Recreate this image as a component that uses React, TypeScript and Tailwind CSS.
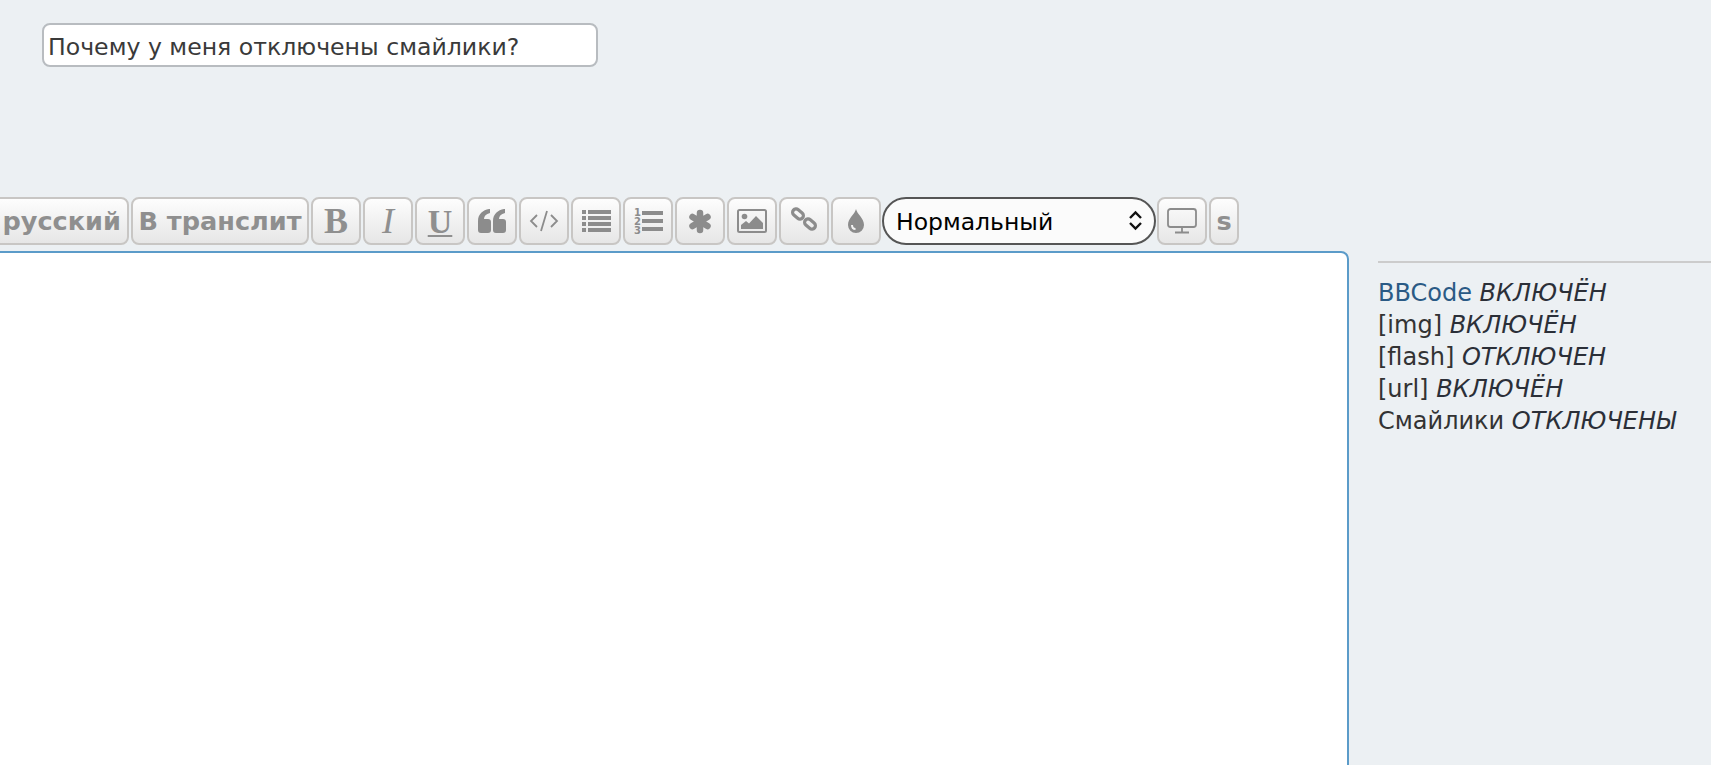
import React from "react";

const btn =
  "flex h-[48px] shrink-0 items-center justify-center rounded-[8px] border-2 border-[#c8c6c4] bg-gradient-to-b from-[#fdfdfd] to-[#e6e6e6] text-[#8f8f8f]";
const square = btn + " w-[50px]";
const G = "#8c8c8c";

function Stat({ label, value, link }: { label: string; value: string; link?: boolean }) {
  return (
    <div>
      <span className={link ? "text-[#2a5a85]" : ""}>{label}</span> <em className="text-[#2b2f38]">{value}</em>
    </div>
  );
}

export default function App() {
  return (
    <div className="h-[765px] w-full overflow-hidden bg-[#ecf0f3] font-['DejaVu_Sans',sans-serif] text-[#333333]">
      <div className="pl-[42px] pt-[23px]">
        <input
          readOnly
          value="Почему у меня отключены смайлики?"
          className="block h-[44px] w-[556px] rounded-[8px] border-2 border-[#b8bcc0] bg-white px-[4px] pt-[4px] text-[23.6px] text-[#3a3a3a] outline-none"
        />
      </div>
      <div className="mt-[130px] flex gap-[2px]">
        <div className={btn + " -ml-[40px] w-[169px] justify-end pr-[6px] text-[25.6px] font-bold"}>русский</div>
        <div className={btn + " w-[178px] text-[25.6px] font-bold"}>В транслит</div>
        <div className={square + " font-['Liberation_Serif',serif] text-[36px] font-bold"}>B</div>
        <div className={square + " font-['Liberation_Serif',serif] text-[36px] italic"}>I</div>
        <div className={square + " font-['Liberation_Serif',serif] text-[34px] font-semibold underline decoration-2 underline-offset-2"}>U</div>
        <div className={square}>
          <svg width="28" height="24" viewBox="0 0 28 24" fill={G}>
            <path d="M0 12C0 5 5 1 11 0h1v4C8 5 6 7 6 10h4c2 0 3 1 3 3v8c0 2-1 3-3 3H3c-2 0-3-1-3-3zM15 12c0-7 5-11 11-12h1v4c-4 1-6 3-6 6h4c2 0 3 1 3 3v8c0 2-1 3-3 3h-7c-2 0-3-1-3-3z" />
          </svg>
        </div>
        <div className={square}>
          <svg width="30" height="24" viewBox="0 0 30 24" fill="none" stroke={G} strokeWidth="1.800">
            <path d="M8 6 2 12l6 6M22 6l6 6-6 6M18 2l-6 20" />
          </svg>
        </div>
        <div className={square}>
          <svg width="29" height="22" viewBox="0 0 29 22" fill={G}>
            <path d="M0 0h4v4H0zM6 0h23v4H6zM0 6h4v4H0zM6 6h23v4H6zM0 12h4v4H0zM6 12h23v4H6zM0 18h4v4H0zM6 18h23v4H6z" />
          </svg>
        </div>
        <div className={square}>
          <svg width="29" height="28" viewBox="0 0 29 28" fill={G}>
            <text x="0" y="9" fontSize="10" fontWeight="bold" fontFamily="DejaVu Sans">1</text>
            <text x="0" y="18" fontSize="10" fontWeight="bold" fontFamily="DejaVu Sans">2</text>
            <text x="0" y="27" fontSize="10" fontWeight="bold" fontFamily="DejaVu Sans">3</text>
            <path d="M8 4h21v4H8zM8 12h21v4H8zM8 20h21v4H8z" />
          </svg>
        </div>
        <div className={square}>
          <svg width="26" height="25" viewBox="0 0 26 25" fill="none" stroke={G} strokeWidth="6.500" strokeLinecap="round">
            <path d="M13 4v17M5.500 8 20.500 17M20.500 8 5.500 17" />
          </svg>
        </div>
        <div className={square}>
          <svg width="30" height="24" viewBox="0 0 30 24">
            <rect x="1" y="1" width="28" height="22" rx="1.500" fill="none" stroke={G} strokeWidth="2" />
            <circle cx="7.500" cy="7.500" r="2.800" fill={G} />
            <path d="M4 20v-4l5-4 3 2.500 7-7.500 7 7v6z" fill={G} />
          </svg>
        </div>
        <div className={square}>
          <svg width="30" height="30" viewBox="0 0 30 30" fill="none" stroke={G} strokeWidth="3.200" className="-mt-[4px]">
            <rect x="3" y="6.500" width="12" height="7" rx="3.500" transform="rotate(40 9 10)" />
            <rect x="15" y="16.500" width="12" height="7" rx="3.500" transform="rotate(40 21 20)" />
          </svg>
        </div>
        <div className={square}>
          <svg width="16" height="24" viewBox="0 0 16 24">
            <path d="M8 0c1 5 8 9 8 16a8 8 0 0 1-16 0C0 9 7 5 8 0z" fill={G} />
            <path d="M4 16c0 3 2 4 3.500 4" fill="none" stroke="#f3f3f3" strokeWidth="2" />
          </svg>
        </div>
        <div className="relative -ml-[1px] flex h-[48px] w-[274px] shrink-0 items-center rounded-[24px] border-2 border-[#555555] bg-[#fbfbfb] pl-[12px] pt-[3px] text-[23.5px] text-black">
          Нормальный
          <svg className="absolute right-[11px] top-[11px]" width="15" height="21" viewBox="0 0 15 21" fill="none" stroke="#111" strokeWidth="2.400">
            <path d="M2 8l5.500-5.500L13 8M2 13l5.500 5.500L13 13" />
          </svg>
        </div>
        <div className={square + " -ml-[1px]"}>
          <svg width="32" height="26" viewBox="0 0 32 26" fill="none" stroke={G} strokeWidth="1.800">
            <rect x="2" y="1" width="28" height="18" rx="2.500" />
            <path d="M16 19v5M9 24.500h14" />
          </svg>
        </div>
        <div className={btn + " w-[30px] text-[25.6px] font-bold"}>s</div>
      </div>
      <div className="mt-[6px] flex">
        <div className="-ml-[8px] h-[600px] w-[1357px] shrink-0 rounded-[8px] border-2 border-[#5b9bc9] bg-white" />
        <div className="ml-[29px] flex-1">
          <div className="mt-[10px] h-[2px] bg-[#cccccc]" />
          <div className="mt-[14px] text-[24px] leading-[32px] text-[#333333]">
            <Stat label="BBCode" value="ВКЛЮЧЁН" link />
            <Stat label="[img]" value="ВКЛЮЧЁН" />
            <Stat label="[flash]" value="ОТКЛЮЧЕН" />
            <Stat label="[url]" value="ВКЛЮЧЁН" />
            <Stat label="Смайлики" value="ОТКЛЮЧЕНЫ" />
          </div>
        </div>
      </div>
    </div>
  );
}
